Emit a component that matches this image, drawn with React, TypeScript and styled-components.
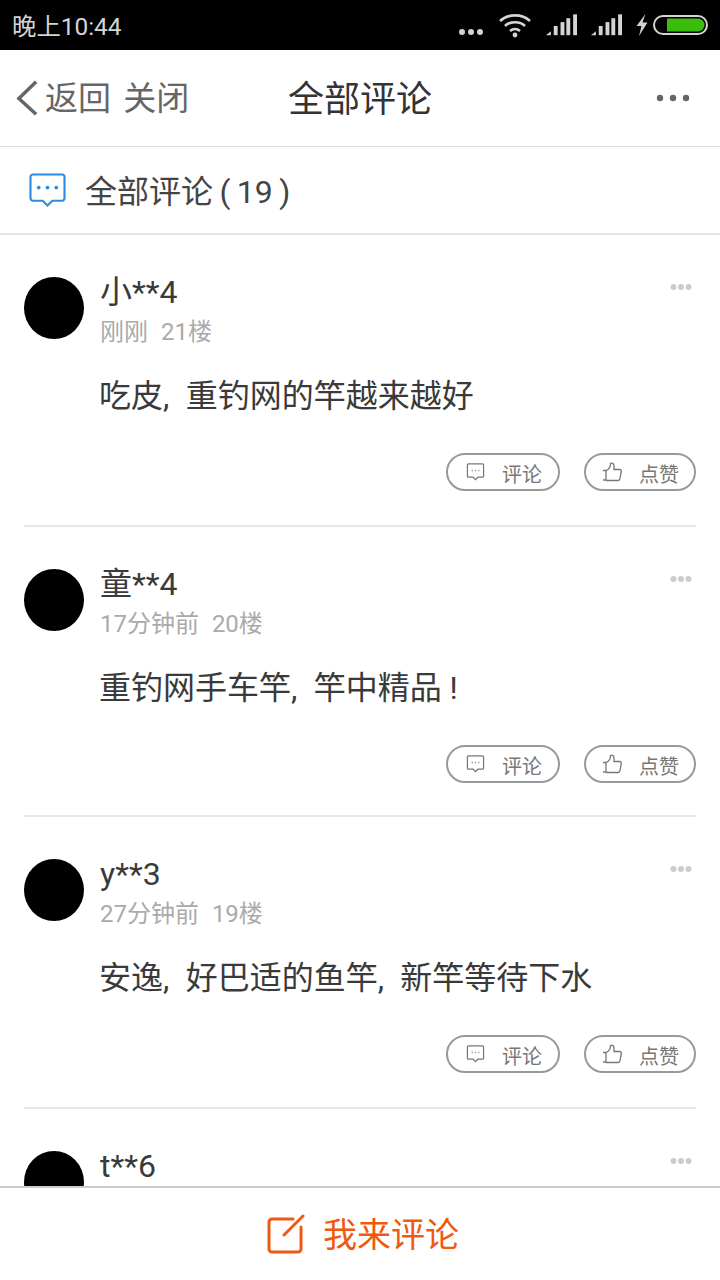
import React from "react";
import styled, { createGlobalStyle } from "styled-components";

const Global = createGlobalStyle`
  html, body { margin: 0; padding: 0; background: #fff; }
  * { box-sizing: border-box; }
  body { font-family: Roboto, "Noto Sans CJK SC", sans-serif; }
`;

const Page = styled.div`
  width: 720px;
  height: 1280px;
  display: flex;
  flex-direction: column;
  overflow: hidden;
  background: #fff;
  color: #333;
`;

const StatusBar = styled.div`
  height: 50px;
  flex: none;
  background: #000;
  display: flex;
  align-items: center;
  justify-content: space-between;
  padding: 0 12px 0 12px;
  color: #d4d4d4;
  font-size: 24.4px;
`;

const StatusTime = styled.span`
  padding-bottom: 2px;
`;

const StatusIcons = styled.div`
  display: flex;
  align-items: center;
`;

const NavBar = styled.div`
  height: 97px;
  flex: none;
  border-bottom: 1px solid #ddd;
  display: grid;
  grid-template-columns: 1fr auto 1fr;
  align-items: center;
  padding: 0 16px;
`;

const NavLeft = styled.div`
  display: flex;
  align-items: center;
  color: #666;
  font-size: 33px;
  gap: 6px;
`;

const NavLinks = styled.span`
  white-space: pre;
  word-spacing: 4px;
  padding-bottom: 4px;
`;

const NavTitle = styled.div`
  font-size: 36px;
  color: #333;
  padding-bottom: 4px;
`;

const NavRight = styled.div`
  display: flex;
  justify-content: flex-end;
  padding-right: 14px;
`;

const SectionHeader = styled.div`
  height: 88px;
  flex: none;
  border-bottom: 2px solid #e3e3e3;
  display: flex;
  align-items: center;
  padding: 0 0 0 29px;
  gap: 19px;
  font-size: 32px;
  color: #444;
`;

const SectionLabel = styled.span`
  white-space: pre;
  word-spacing: -1.5px;
  padding-bottom: 2px;
`;

const List = styled.div`
  flex: 1;
  min-height: 0;
  overflow: hidden;
`;

const Card = styled.div<{ $height: number }>`
  height: ${(p) => p.$height}px;
  margin: 0 24px;
  padding-top: 38px;
  border-bottom: 2px solid #e8e8e8;
  display: grid;
  grid-template-columns: 60px 1fr;
  column-gap: 16px;
  align-content: start;
  &:last-child { border-bottom: 0; }
`;

const Avatar = styled.div`
  width: 60px;
  height: 62px;
  border-radius: 50%;
  background: #000;
  margin-top: 4px;
`;

const Body = styled.div`
  display: flex;
  flex-direction: column;
  min-width: 0;
`;

const HeadRow = styled.div`
  display: flex;
  justify-content: space-between;
  align-items: flex-start;
`;

const Name = styled.div`
  font-size: 32px;
  line-height: 38px;
  height: 38px;
  color: #3a3a3a;
`;

const MoreIcon = styled.svg`
  margin: 10px 4px 0 0;
  display: block;
`;

const Meta = styled.div`
  font-size: 24px;
  line-height: 32px;
  height: 32px;
  margin-top: 5px;
  color: #aaa;
  white-space: pre;
  word-spacing: 0.5px;
`;

const Text = styled.div`
  margin-top: 28px;
  font-size: 32px;
  line-height: 40px;
  color: #3a3a3a;
  margin-left: -1px;
  white-space: pre;
`;

const Comma = styled.span`
  letter-spacing: 4.2px;
`;

const Actions = styled.div`
  display: flex;
  justify-content: flex-end;
  gap: 24px;
  margin-top: 37px;
`;

const Pill = styled.div<{ $width: number; $left: number; $right: number }>`
  width: ${(p) => p.$width}px;
  height: 38px;
  border: 2px solid #999;
  border-radius: 19px;
  display: flex;
  align-items: center;
  justify-content: space-between;
  padding: 0 ${(p) => p.$right}px 0 ${(p) => p.$left}px;
  color: #777;
  font-size: 20px;
  line-height: 1;
`;

const PillLabel = styled.span`
  margin-top: 6px;
`;

const Footer = styled.div`
  height: 94px;
  flex: none;
  border-top: 2px solid #ccc;
  background: #fff;
  display: flex;
  align-items: center;
  justify-content: center;
  gap: 18px;
  color: #f0590f;
  font-size: 34px;
  padding-left: 6px;
`;

const FooterLabel = styled.span`
  padding-bottom: 4px;
`;

const Wifi = () => (
  <svg width="34" height="26" viewBox="0 0 34 26" fill="none" stroke="#d4d4d4" strokeWidth="2.6" style={{ marginRight: 14 }}>
    <path d="M2 9C10 1.5 24 1.5 32 9" />
    <path d="M7 14C12 9 22 9 27 14" />
    <path d="M12 19C15 16.5 19 16.5 22 19" />
    <circle cx="17" cy="23" r="2.4" fill="#d4d4d4" stroke="none" />
  </svg>
);

const Signal = ({ mr }: { mr: number }) => (
  <svg width="31" height="22" viewBox="0 0 32 22" fill="#d4d4d4" style={{ marginRight: mr }}>
    <path d="M0 21.5L5 17.5V21.5Z" />
    <rect x="8" y="12" width="4" height="9.5" />
    <rect x="15" y="8" width="4" height="13.5" />
    <rect x="21" y="4" width="4" height="17.5" />
    <rect x="28" y="0" width="4" height="21.5" />
  </svg>
);

const Battery = () => (
  <svg width="55" height="20" viewBox="0 0 55 20" fill="none">
    <rect x="1" y="1" width="53" height="18" rx="9" stroke="#d4d4d4" strokeWidth="2" />
    <path d="M14 3.5H45A6.5 6.5 0 0 1 51.5 10A6.5 6.5 0 0 1 45 16.5H14Z" fill="#3cbc0c" />
  </svg>
);

const CommentGlyph = () => (
  <svg width="19" height="20" viewBox="0 0 20 20" fill="none" stroke="#777" strokeWidth="1.3">
    <path d="M2.5 1.5H17.5A1 1 0 0 1 18.5 2.5V14.5A1 1 0 0 1 17.5 15.5H12.5L10 18L7.5 15.5H2.5A1 1 0 0 1 1.5 14.5V2.5A1 1 0 0 1 2.5 1.5Z" />
    <path d="M6 8.5H7M9.5 8.5H10.5M13 8.5H14" strokeWidth="1.6" />
  </svg>
);

const ThumbGlyph = () => (
  <svg width="20" height="20" viewBox="0 0 20 20" fill="none" stroke="#777" strokeWidth="1.3">
    <path d="M1 8.5H4V18H1" />
    <path d="M4 8.5C7 7.5 8.5 4.5 8.5 1.5C10.5 0.5 12 2 12 4V7.5H17.5C19 7.5 19.5 8.5 19.2 10L18 16.5C17.8 18 17 18.5 16 18.5H4" />
  </svg>
);

const comments = [
  { name: "小**4", meta: "刚刚  21楼", text: "吃皮, 重钓网的竿越来越好", height: 292 },
  { name: "童**4", meta: "17分钟前  20楼", text: "重钓网手车竿, 竿中精品 !", height: 290 },
  { name: "y**3", meta: "27分钟前  19楼", text: "安逸, 好巴适的鱼竿, 新竿等待下水", height: 292 },
  { name: "t**6", meta: "", text: "", height: 200 },
];

const renderText = (text: string) =>
  text.split(", ").map((part, i) => (
    <React.Fragment key={part}>
      {i > 0 && <Comma>, </Comma>}
      {part}
    </React.Fragment>
  ));

export default function App() {
  return (
    <Page>
      <Global />
      <StatusBar>
        <StatusTime>晚上10:44</StatusTime>
        <StatusIcons>
          <svg width="26" height="8" viewBox="0 0 26 8" fill="#d4d4d4" style={{ marginRight: 14, marginTop: 14 }}>
            <circle cx="4" cy="4" r="3" />
            <circle cx="13" cy="4" r="3" />
            <circle cx="22" cy="4" r="3" />
          </svg>
          <Wifi />
          <Signal mr={14} />
          <Signal mr={14} />
          <svg width="12" height="22" viewBox="0 0 12 22" fill="#d4d4d4" style={{ marginRight: 5 }}>
            <path d="M9.5 0L0.5 12H5.5L3 22L11.5 8.5H6.5Z" />
          </svg>
          <Battery />
        </StatusIcons>
      </StatusBar>
      <NavBar>
        <NavLeft>
          <svg width="23" height="38" viewBox="0 0 24 38" fill="none" stroke="#666" strokeWidth="3.6">
            <path d="M21 2L3 19.5L21 36" />
          </svg>
          <NavLinks>返回 关闭</NavLinks>
        </NavLeft>
        <NavTitle>全部评论</NavTitle>
        <NavRight>
          <svg width="34" height="8" viewBox="0 0 34 8" fill="#666">
            <circle cx="4" cy="4" r="3.2" />
            <circle cx="17" cy="4" r="3.2" />
            <circle cx="30" cy="4" r="3.2" />
          </svg>
        </NavRight>
      </NavBar>
      <SectionHeader>
        <svg width="37" height="35" viewBox="0 0 38 36" fill="none" stroke="#2a8ae6" strokeWidth="2.2">
          <path d="M4 1.5H34A2.5 2.5 0 0 1 36.5 4V26A2.5 2.5 0 0 1 34 28.5H24L19 33.5L14 28.5H4A2.5 2.5 0 0 1 1.5 26V4A2.5 2.5 0 0 1 4 1.5Z" />
          <circle cx="10" cy="15" r="1.9" fill="#2a8ae6" stroke="none" />
          <circle cx="19" cy="15" r="1.9" fill="#2a8ae6" stroke="none" />
          <circle cx="28" cy="15" r="1.9" fill="#2a8ae6" stroke="none" />
        </svg>
        <SectionLabel>全部评论 ( 19 )</SectionLabel>
      </SectionHeader>
      <List>
        {comments.map((c) => (
          <Card key={c.name} $height={c.height}>
            <Avatar />
            <Body>
              <HeadRow>
                <Name>{c.name}</Name>
                <MoreIcon width="22" height="8" viewBox="0 0 22 8" fill="#ccc">
                  <circle cx="3.5" cy="4" r="3" />
                  <circle cx="11" cy="4" r="3" />
                  <circle cx="18.5" cy="4" r="3" />
                </MoreIcon>
              </HeadRow>
              {c.meta && <Meta>{c.meta}</Meta>}
              {c.text && <Text>{renderText(c.text)}</Text>}
              {c.text && (
                <Actions>
                  <Pill $width={114} $left={18} $right={16}>
                    <CommentGlyph />
                    <PillLabel>评论</PillLabel>
                  </Pill>
                  <Pill $width={112} $left={16} $right={15}>
                    <ThumbGlyph />
                    <PillLabel>点赞</PillLabel>
                  </Pill>
                </Actions>
              )}
            </Body>
          </Card>
        ))}
      </List>
      <Footer>
        <svg width="38" height="40" viewBox="0 0 38 40" fill="none" stroke="#f0590f" strokeWidth="3" strokeLinecap="round">
          <path d="M26 5H5A3 3 0 0 0 2 8V35A3 3 0 0 0 5 38H31A3 3 0 0 0 34 35V13" />
          <path d="M17 21L36 2" />
        </svg>
        <FooterLabel>我来评论</FooterLabel>
      </Footer>
    </Page>
  );
}
